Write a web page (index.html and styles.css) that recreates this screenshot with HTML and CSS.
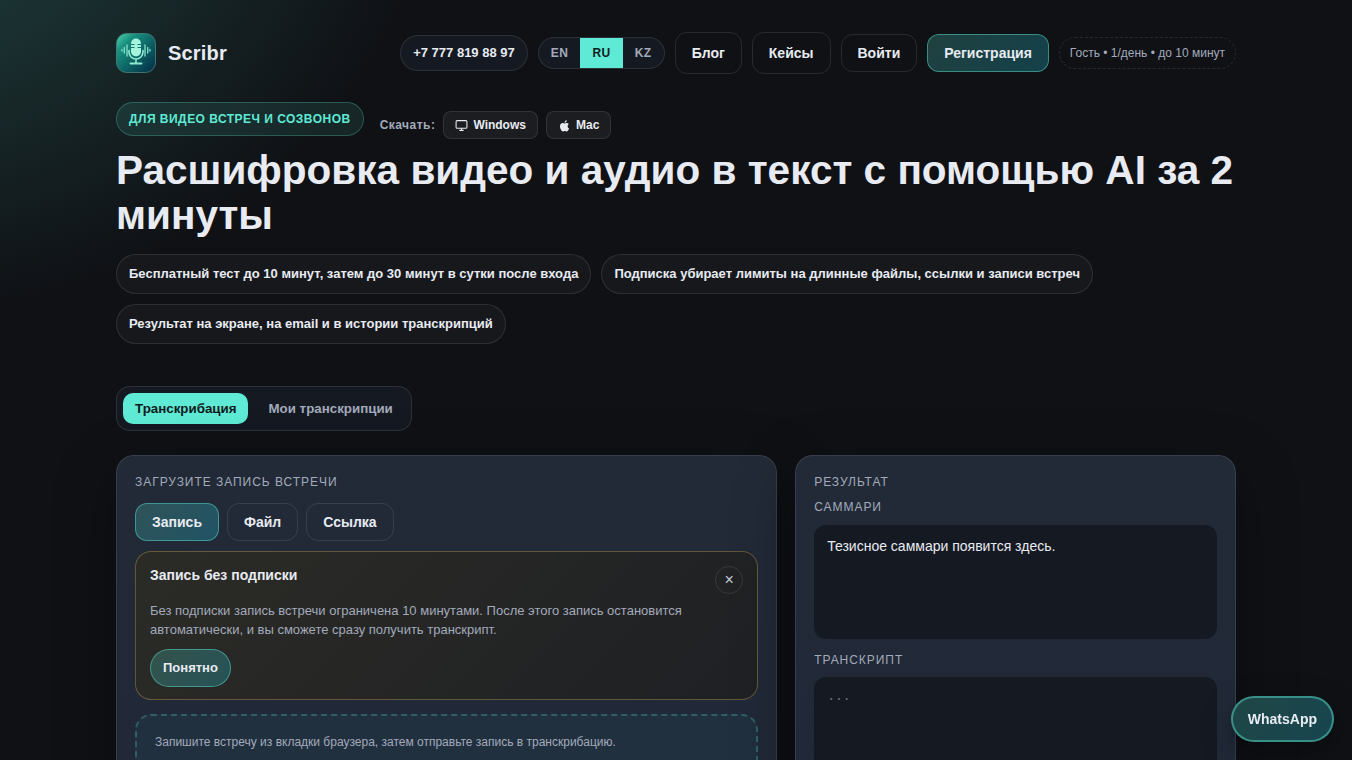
FILE: index.html
```html
<!DOCTYPE html>
<html lang="ru">
<head>
  <meta charset="UTF-8">
  <meta name="viewport" content="width=device-width, initial-scale=1.0">
  <title>Scribr</title>
  <link rel="stylesheet" href="styles.css">
</head>
<body>
  <div class="container">
    <header class="header">
      <a class="brand" href="#">
        <svg class="brand-logo" viewBox="0 0 40 40" aria-hidden="true">
          <defs>
            <linearGradient id="logoBg" x1="0" y1="0" x2="1" y2="1">
              <stop offset="0" stop-color="#4fd6ac"/>
              <stop offset="0.25" stop-color="#188f7e"/>
              <stop offset="0.6" stop-color="#0c5d60"/>
              <stop offset="1" stop-color="#032c48"/>
            </linearGradient>
          </defs>
          <rect x="0.5" y="0.5" width="39" height="39" rx="10" fill="url(#logoBg)" stroke="#4b8580" stroke-opacity="0.8"/>
          <rect x="15" y="5.500" width="10" height="18" rx="5" fill="#a5f5de"/>
          <path d="M15 11.500h3.500M15 14.500h3.500M21.500 11.500h3.500M21.500 14.500h3.500" stroke="#12766f" stroke-width="1"/>
          <path d="M13 17.500v1.500a7 7 0 0 0 14 0V17.500M20 26v4" fill="none" stroke="#8deacf" stroke-width="1.600" stroke-linecap="round"/>
          <path d="M14.500 30.500h11" stroke="#8deacf" stroke-width="2" stroke-linecap="round"/>
          <path d="M6 16.500v1.500M8.300 14.500v5.500M11 12v11M29 12v11M31.700 14.500v5.500M34 16.500v1.500" stroke="#7fdcc6" stroke-width="1.400" stroke-linecap="round"/>
        </svg>
        <span>Scribr</span>
      </a>
      <nav class="nav">
        <a class="phone" href="tel:+77778198897">+7 777 819 88 97</a>
        <div class="lang">
          <button type="button">EN</button>
          <button type="button" class="active">RU</button>
          <button type="button">KZ</button>
        </div>
        <a class="btn btn-link" href="#">Блог</a>
        <a class="btn btn-link" href="#">Кейсы</a>
        <button type="button" class="btn">Войти</button>
        <button type="button" class="btn btn-accent">Регистрация</button>
        <span class="quota">Гость • 1/день • до 10 минут</span>
      </nav>
    </header>

    <section class="hero">
      <div class="hero-top">
        <span class="eyebrow">Для видео встреч и созвонов</span>
        <div class="downloads">
          <span class="downloads-label">Скачать:</span>
          <a class="download" href="#">
            <svg width="13" height="13" viewBox="0 0 24 24" fill="none" stroke="currentColor" stroke-width="2" aria-hidden="true">
              <rect x="2" y="3" width="20" height="14" rx="2"/>
              <path d="M8 21h8M12 17v4"/>
            </svg>
            Windows
          </a>
          <a class="download" href="#">
            <svg width="13" height="13" viewBox="2 1 20 21" fill="currentColor" aria-hidden="true">
              <path d="M17.050 12.540c0-2.300 1.880-3.400 1.960-3.460-1.070-1.560-2.730-1.780-3.320-1.800-1.410-.14-2.760.83-3.480.83-.72 0-1.830-.81-3-.79-1.540.02-2.970.9-3.760 2.280-1.610 2.790-.41 6.920 1.150 9.180.77 1.110 1.680 2.350 2.870 2.300 1.150-.05 1.590-.74 2.980-.74s1.790.74 3 .72c1.240-.02 2.020-1.130 2.780-2.240.88-1.280 1.240-2.520 1.260-2.590-.03-.01-2.420-.93-2.440-3.690zM14.760 5.780c.63-.77 1.060-1.840.94-2.910-.91.04-2.020.61-2.670 1.370-.58.68-1.100 1.770-.96 2.820 1.020.08 2.050-.52 2.690-1.280z"/>
            </svg>
            Mac
          </a>
        </div>
      </div>
      <h1>Расшифровка видео и аудио в текст с помощью AI за 2 минуты</h1>
      <ul class="benefits">
        <li>Бесплатный тест до 10 минут, затем до 30 минут в сутки после входа</li>
        <li>Подписка убирает лимиты на длинные файлы, ссылки и записи встреч</li>
        <li>Результат на экране, на email и в истории транскрипций</li>
      </ul>
    </section>

    <div class="tabs">
      <button type="button" class="tab active">Транскрибация</button>
      <button type="button" class="tab">Мои транскрипции</button>
    </div>

    <main class="panels">
      <section class="panel">
        <h2 class="label">Загрузите запись встречи</h2>
        <div class="modes">
          <button type="button" class="btn btn-accent">Запись</button>
          <button type="button" class="btn">Файл</button>
          <button type="button" class="btn">Ссылка</button>
        </div>
        <div class="notice">
          <div class="notice-head">
            <h3>Запись без подписки</h3>
            <button type="button" class="notice-close" aria-label="Закрыть">×</button>
          </div>
          <p>Без подписки запись встречи ограничена 10 минутами. После этого запись остановится автоматически, и вы сможете сразу получить транскрипт.</p>
          <button type="button" class="btn btn-accent btn-round">Понятно</button>
        </div>
        <div class="recorder">
          <p>Запишите встречу из вкладки браузера, затем отправьте запись в транскрибацию.</p>
        </div>
      </section>

      <section class="panel">
        <h2 class="label">Результат</h2>
        <h3 class="label">Саммари</h3>
        <div class="summary">Тезисное саммари появится здесь.</div>
        <label class="label" for="transcript">Транскрипт</label>
        <textarea id="transcript" class="transcript" placeholder="..." readonly></textarea>
      </section>
    </main>
  </div>

  <a class="whatsapp" href="#">WhatsApp</a>
</body>
</html>
```
FILE: styles.css
```css
:root {
  --bg: #0f1115;
  --text: #e8ebf2;
  --muted: #a3aabb;
  --accent: #5eead4;
  --line: rgba(255, 255, 255, 0.1);
  --dark: #151922;
}
* {
  box-sizing: border-box;
}
html {
  background: var(--bg);
  scrollbar-width: none;
}
body {
  margin: 0;
  min-height: 100vh;
  font-family: "Liberation Sans", Arial, sans-serif;
  font-size: 14px;
  line-height: 20px;
  color: var(--text);
  background: radial-gradient(570px 470px at -135px -152px, rgba(94, 234, 212, 0.26), transparent) no-repeat;
}
h1, h2, h3, p, ul {
  margin: 0;
}
a {
  color: inherit;
  text-decoration: none;
}
button {
  font-family: inherit;
  color: inherit;
  cursor: pointer;
}
.container {
  max-width: 1168px;
  margin: 0 auto;
  padding: 32px 24px 64px;
}

/* header */
.header {
  display: flex;
  align-items: center;
  justify-content: space-between;
  margin-bottom: 28px;
}
.brand {
  display: flex;
  align-items: center;
  gap: 12px;
  font-size: 20px;
  font-weight: 700;
  letter-spacing: 0.01em;
}
.brand-logo {
  width: 40px;
  height: 40px;
}
.nav {
  display: flex;
  align-items: center;
  gap: 10px;
}
.phone {
  padding: 8px 12px;
  border: 1px solid var(--line);
  border-radius: 999px;
  background: var(--dark);
  font-size: 13px;
  line-height: 18px;
  font-weight: 700;
}
.lang {
  display: flex;
  overflow: hidden;
  border: 1px solid var(--line);
  border-radius: 999px;
  background: var(--dark);
}
.lang button {
  padding: 8px 12px;
  border: 0;
  background: none;
  color: var(--muted);
  font-size: 12px;
  line-height: 14px;
  font-weight: 700;
  letter-spacing: 0.04em;
}
.lang .active {
  background: var(--accent);
  color: #0f1a1c;
}
.btn {
  padding: 10px 16px;
  border: 1px solid var(--line);
  border-radius: 12px;
  background: transparent;
  font-size: 14px;
  line-height: 16px;
  font-weight: 700;
}
.btn-link {
  line-height: 20px;
}
.btn-accent {
  border-color: rgba(94, 234, 212, 0.45);
  background: linear-gradient(135deg, rgba(94, 234, 212, 0.22), rgba(34, 211, 238, 0.25));
}
.btn-round {
  padding: 10px 12px;
  border-radius: 999px;
  font-size: 13px;
}
.quota {
  padding: 6px 10px;
  border: 1px dashed var(--line);
  border-radius: 999px;
  color: var(--muted);
  font-size: 12px;
  line-height: 18px;
}

/* hero */
.hero-top {
  display: flex;
  align-items: flex-start;
  gap: 16px;
}
.eyebrow {
  padding: 8px 12px;
  border: 1px solid rgba(94, 234, 212, 0.25);
  border-radius: 999px;
  background: rgba(94, 234, 212, 0.1);
  color: var(--accent);
  font-size: 12px;
  line-height: 16px;
  font-weight: 700;
  letter-spacing: 0.04em;
  text-transform: uppercase;
}
.downloads {
  display: flex;
  align-items: center;
  gap: 8px;
  padding-top: 9px;
}
.downloads-label {
  color: var(--muted);
  font-size: 12px;
  font-weight: 700;
  letter-spacing: 0.04em;
}
.download {
  display: flex;
  align-items: center;
  gap: 5px;
  padding: 5px 11px;
  border: 1px solid var(--line);
  border-radius: 8px;
  background: rgba(255, 255, 255, 0.05);
  font-size: 12px;
  line-height: 16px;
  font-weight: 700;
}
h1 {
  margin-top: 9px;
  font-size: clamp(28px, 3vw, 48px);
  line-height: 45px;
  font-weight: 700;
}
.benefits {
  display: flex;
  flex-wrap: wrap;
  gap: 10px;
  margin-top: 16px;
  padding: 0;
  list-style: none;
}
.benefits li {
  padding: 9px 12px;
  border: 1px solid var(--line);
  border-radius: 999px;
  background: rgba(255, 255, 255, 0.03);
  font-size: 13px;
  font-weight: 700;
}

/* tabs */
.tabs {
  display: flex;
  gap: 8px;
  width: fit-content;
  margin: 42px 0 24px;
  padding: 6px;
  border: 1px solid var(--line);
  border-radius: 14px;
  background: var(--dark);
}
.tab {
  padding: 8px 12px;
  border: 0;
  border-radius: 10px;
  background: none;
  color: var(--muted);
  line-height: 15px;
  font-weight: 700;
}
.tab.active {
  background: var(--accent);
  color: #0f1a1c;
}

/* panels */
.panels {
  display: grid;
  grid-template-columns: 3fr 2fr;
  gap: 18px;
}
.panel {
  padding: 18px;
  border: 1px solid var(--line);
  border-radius: 18px;
  background: linear-gradient(180deg, #222a37, #202839);
  box-shadow: 0 20px 60px rgba(0, 0, 0, 0.35);
}
.label {
  display: block;
  color: var(--muted);
  font-size: 12px;
  line-height: 16px;
  font-weight: 400;
  letter-spacing: 0.08em;
  text-transform: uppercase;
}
.modes {
  display: flex;
  gap: 8px;
  margin: 13px 0 10px;
}
.notice {
  padding: 14px 14px 12px;
  border: 1px solid rgba(250, 204, 110, 0.3);
  border-radius: 16px;
  background: linear-gradient(135deg, #2b2b26, #1f2024);
}
.notice-head {
  display: flex;
  justify-content: space-between;
}
.notice h3 {
  font-size: 14px;
  line-height: 18px;
}
.notice-close {
  width: 28px;
  height: 28px;
  padding: 0;
  border: 1px solid var(--line);
  border-radius: 50%;
  background: none;
  color: #c5cad8;
  font-size: 16px;
  line-height: 24px;
}
.notice p {
  margin: 7px 0 10px;
  color: var(--muted);
  font-size: 13px;
  line-height: 19px;
}
.recorder {
  min-height: 220px;
  margin-top: 14px;
  padding: 18px;
  border: 2px dashed rgba(94, 234, 212, 0.25);
  border-radius: 16px;
  background: #20303f;
  color: var(--muted);
  font-size: 12px;
  line-height: 16px;
}
.label + .label {
  margin-top: 9px;
}
.summary {
  min-height: 114px;
  margin: 10px 0 13px;
  padding: 11px 13px;
  border-radius: 12px;
  background: var(--dark);
}
.transcript {
  display: block;
  width: 100%;
  height: 260px;
  margin-top: 9px;
  padding: 11px 13px;
  border: 0;
  border-radius: 12px;
  background: var(--dark);
  color: var(--text);
  font-family: "Liberation Mono", monospace;
  font-size: 13px;
  line-height: 18px;
  resize: none;
}
.transcript::placeholder {
  color: #757575;
}

.whatsapp {
  position: fixed;
  right: 18px;
  bottom: 18px;
  padding: 11px 15px;
  border: 2px solid rgba(94, 234, 212, 0.45);
  border-radius: 999px;
  background: linear-gradient(135deg, #1f4646, #17454f);
  box-shadow: 0 10px 30px rgba(0, 0, 0, 0.35);
  font-weight: 700;
}
```
